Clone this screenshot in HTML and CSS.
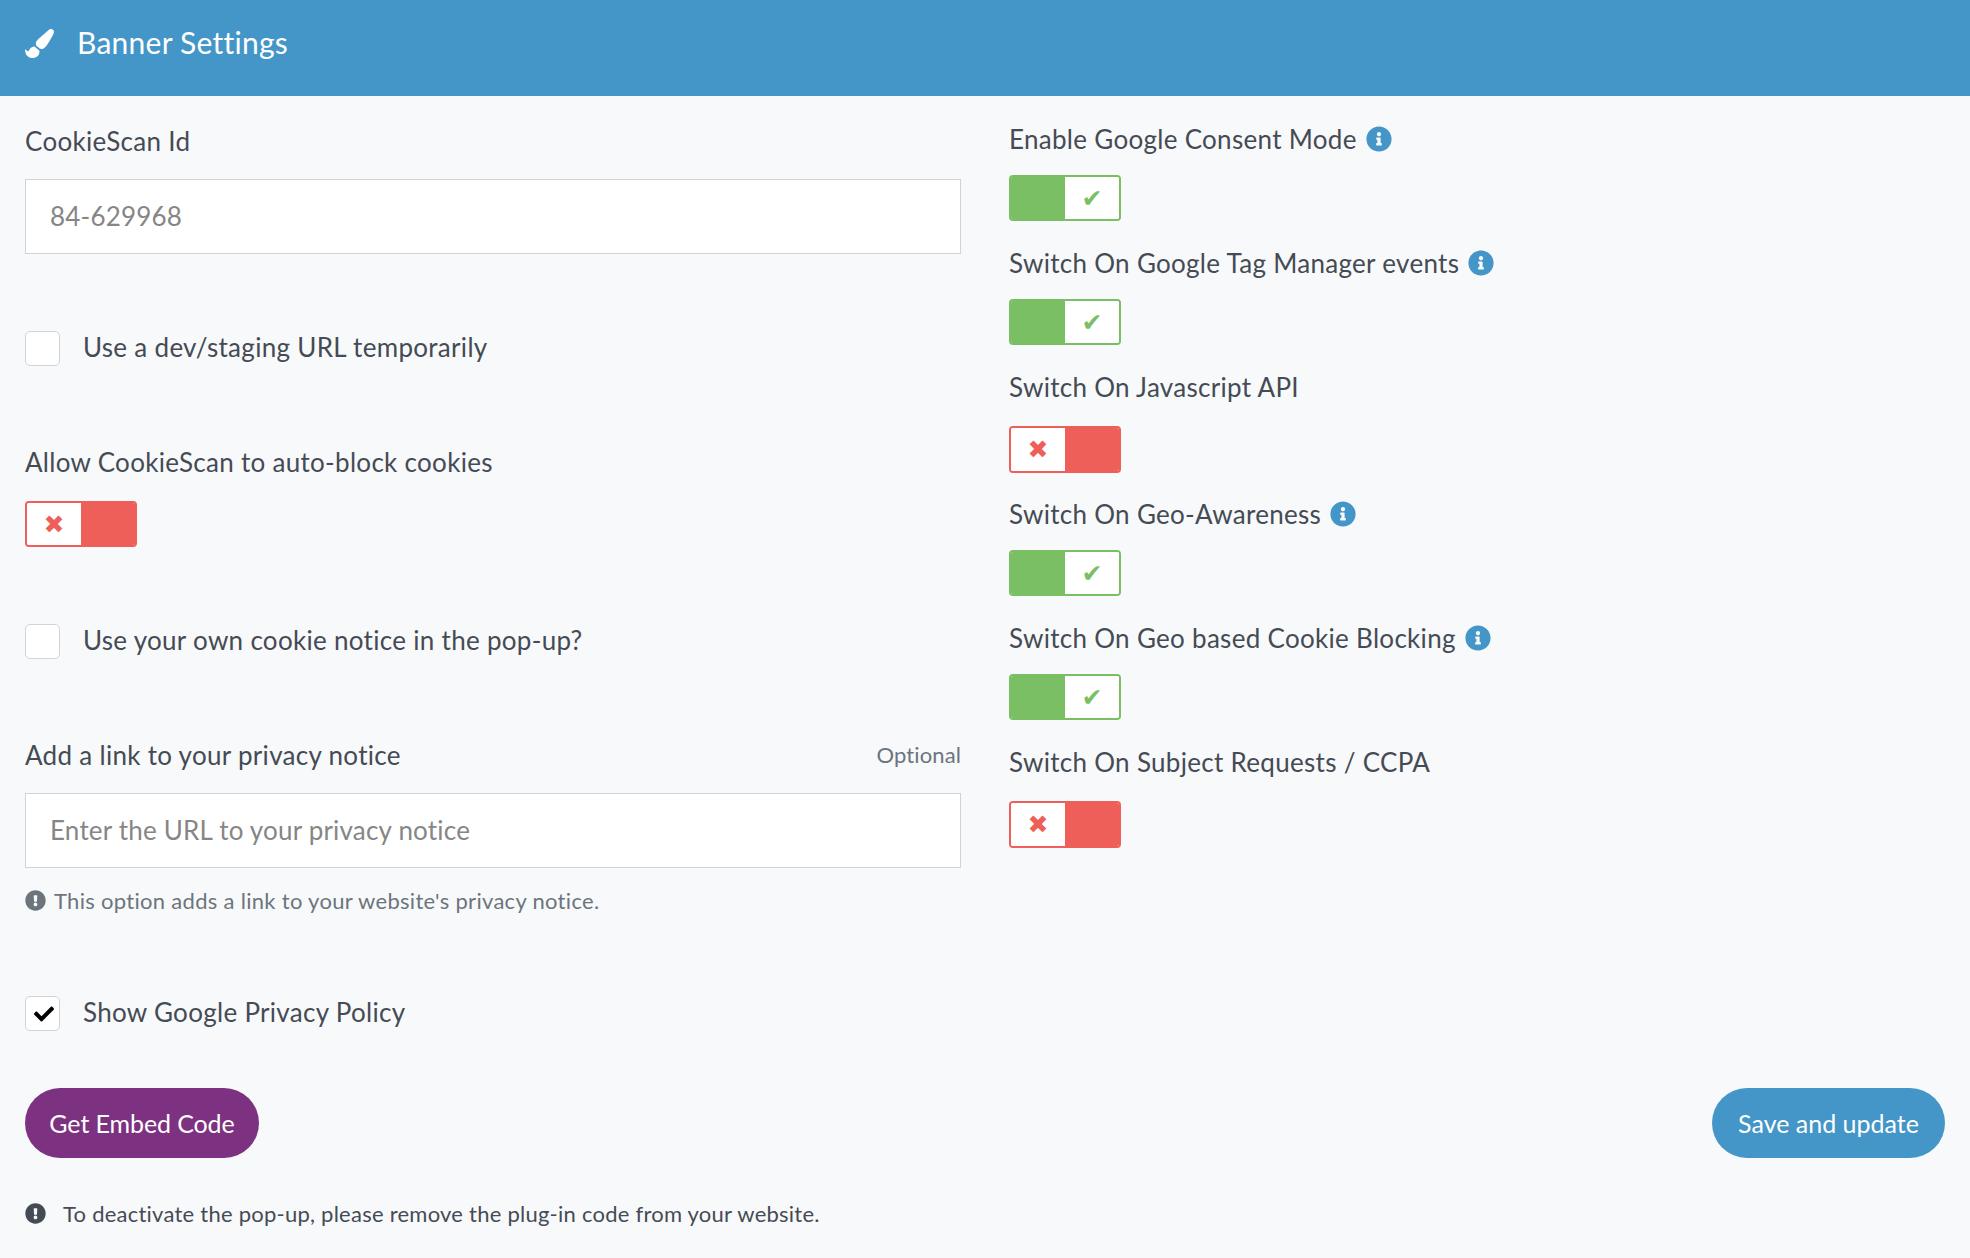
FILE: index.html
```html
<!DOCTYPE html>
<html lang="en">
<head>
<meta charset="utf-8">
<title>Banner Settings</title>
<link rel="stylesheet" href="styles.css">
</head>
<body>
<svg class="sprite" width="0" height="0" aria-hidden="true">
  <symbol id="i-brush" viewBox="0 0 512 512"><path d="M167.02 309.34c-40.12 2.58-76.53 17.86-97.19 72.3-2.35 6.21-8 9.98-14.59 9.98-11.11 0-45.46-27.67-55.25-34.35C0 439.62 37.93 512 128 512c75.86 0 128-43.77 128-120.19 0-3.11-.65-6.08-.97-9.13l-88.01-73.34zM457.89 0c-15.16 0-29.37 6.71-40.21 16.45C213.27 199.05 192 203.34 192 257.09c0 13.7 3.25 26.76 8.73 38.7l63.82 53.18c7.21 1.8 14.64 3.03 22.39 3.03 62.11 0 98.11-45.47 211.16-256.46 7.38-14.35 13.9-29.85 13.9-45.99C512 20.64 486 0 457.89 0z"/></symbol>
  <symbol id="i-info" viewBox="0 0 512 512"><path d="M256 8C119.043 8 8 119.083 8 256c0 136.997 111.043 248 248 248s248-111.003 248-248C504 119.083 392.957 8 256 8zm0 110c23.196 0 42 18.804 42 42s-18.804 42-42 42-42-18.804-42-42 18.804-42 42-42zm56 254c0 6.627-5.373 12-12 12h-88c-6.627 0-12-5.373-12-12v-24c0-6.627 5.373-12 12-12h12v-64h-12c-6.627 0-12-5.373-12-12v-24c0-6.627 5.373-12 12-12h64c6.627 0 12 5.373 12 12v100h12c6.627 0 12 5.373 12 12v24z"/></symbol>
  <symbol id="i-alert" viewBox="0 0 512 512"><path d="M504 256c0 136.997-111.043 248-248 248S8 392.997 8 256C8 119.083 119.043 8 256 8s248 111.083 248 248zm-248 50c-25.405 0-46 20.595-46 46s20.595 46 46 46 46-20.595 46-46-20.595-46-46-46zm-43.673-165.346l7.418 136c.347 6.364 5.609 11.346 11.982 11.346h48.546c6.373 0 11.635-4.982 11.982-11.346l7.418-136c.375-6.874-5.098-12.654-11.982-12.654h-63.383c-6.884 0-12.356 5.78-11.981 12.654z"/></symbol>
  <symbol id="i-check" viewBox="0 0 512 512"><path d="M173.898 439.404l-166.4-166.4c-9.997-9.997-9.997-26.206 0-36.204l36.203-36.204c9.997-9.998 26.207-9.998 36.204 0L192 312.69 432.095 72.596c9.997-9.997 26.207-9.997 36.204 0l36.203 36.204c9.997 9.997 9.997 26.206 0 36.204l-294.4 294.401c-9.998 9.997-26.207 9.997-36.204-.001z"/></symbol>
</svg>

<header class="header">
  <svg class="header-icon"><use href="#i-brush"/></svg>
  <h1 class="header-title">Banner Settings</h1>
</header>

<main class="content">
  <section class="column">
    <label class="label">CookieScan Id</label>
    <input class="input input-id" type="text" placeholder="84-629968">

    <div class="check-row check-first">
      <span class="box"></span><span class="check-text">Use a dev/staging URL temporarily</span>
    </div>

    <label class="label label-block">Allow CookieScan to auto-block cookies</label>
    <div class="switch switch-off"><span class="knob">✖</span><span class="fill"></span></div>

    <div class="check-row check-second">
      <span class="box"></span><span class="check-text">Use your own cookie notice in the pop-up?</span>
    </div>

    <div class="label-split">
      <label class="label">Add a link to your privacy notice</label>
      <span class="optional">Optional</span>
    </div>
    <input class="input input-id" type="text" placeholder="Enter the URL to your privacy notice">
    <p class="hint"><svg class="hint-icon"><use href="#i-alert"/></svg>This option adds a link to your website's privacy notice.</p>

    <div class="check-row check-third">
      <span class="box"><svg class="box-tick"><use href="#i-check"/></svg></span><span class="check-text">Show Google Privacy Policy</span>
    </div>

    <div class="embed-row">
      <button class="btn btn-embed" type="button">Get Embed Code</button>
    </div>
    <p class="notice"><svg class="notice-icon"><use href="#i-alert"/></svg>To deactivate the pop-up, please remove the plug-in code from your website.</p>
  </section>

  <section class="column column-right">
    <div class="option">
      <div class="option-label">Enable Google Consent Mode<svg class="info"><use href="#i-info"/></svg></div>
      <div class="switch switch-on"><span class="fill"></span><span class="knob">✔</span></div>
    </div>
    <div class="option">
      <div class="option-label">Switch On Google Tag Manager events<svg class="info"><use href="#i-info"/></svg></div>
      <div class="switch switch-on"><span class="fill"></span><span class="knob">✔</span></div>
    </div>
    <div class="option option-plain">
      <div class="option-label">Switch On Javascript API</div>
      <div class="switch switch-off"><span class="knob">✖</span><span class="fill"></span></div>
    </div>
    <div class="option">
      <div class="option-label">Switch On Geo-Awareness<svg class="info"><use href="#i-info"/></svg></div>
      <div class="switch switch-on"><span class="fill"></span><span class="knob">✔</span></div>
    </div>
    <div class="option">
      <div class="option-label">Switch On Geo based Cookie Blocking<svg class="info"><use href="#i-info"/></svg></div>
      <div class="switch switch-on"><span class="fill"></span><span class="knob">✔</span></div>
    </div>
    <div class="option option-plain">
      <div class="option-label">Switch On Subject Requests / CCPA</div>
      <div class="switch switch-off"><span class="knob">✖</span><span class="fill"></span></div>
    </div>
    <div class="save-row">
      <button class="btn btn-save" type="button">Save and update</button>
    </div>
  </section>
</main>
</body>
</html>
```
FILE: styles.css
```css
* { box-sizing: border-box; }
html, body { margin: 0; padding: 0; }
body {
  height: 1258px;
  background: #f8f9fb;
  color: #454b54;
  font-family: "Lato", "Noto Sans", sans-serif;
  font-size: 26px;
  letter-spacing: 0.3px;
  line-height: 30px;
  overflow: hidden;
}
.sprite { position: absolute; }

.header {
  height: 96px;
  background: #4396c7;
  color: #fff;
  display: flex;
  align-items: center;
  padding: 0 0 10px 25px;
}
.header-icon { width: 29px; height: 29px; fill: #fff; margin-right: 23px; }
.header-title { margin: 0 0 2px; font-size: 30px; font-weight: 400; line-height: 34px; letter-spacing: 0.25px; }

.content {
  display: grid;
  grid-template-columns: 936px 936px;
  column-gap: 48px;
  padding: 30px 25px 0;
}
.column { display: flex; flex-direction: column; align-items: stretch; }

.label { display: block; height: 30px; }
.label-block { margin-top: 81px; margin-bottom: 24px; }
.label-split { display: flex; justify-content: space-between; align-items: center; margin-top: 81px; }
.optional { font-size: 22px; letter-spacing: 0.1px; color: #6c757d; }

.input {
  display: block;
  width: 100%;
  height: 75px;
  margin-top: 23px;
  padding: 0 24px 2px;
  background: #fff;
  border: 1px solid #ced4da;
  border-radius: 0;
  color: #495057;
  font: inherit;
  letter-spacing: 0.2px;
  outline: none;
}
.input::placeholder { color: #868686; opacity: 1; }

.check-row { display: flex; align-items: center; }
.check-first { margin-top: 77px; }
.check-second { margin-top: 77px; }
.check-third { margin-top: 82px; }
.box {
  flex: none;
  width: 35px;
  height: 35px;
  display: flex;
  align-items: center;
  justify-content: center;
  background: #fff;
  border: 1px solid #ced4da;
  border-radius: 5px;
}
.box-tick { width: 20px; height: 20px; fill: #000; margin-top: 1px; margin-left: 3px; }
.check-text { margin-left: 23px; padding-bottom: 4px; }

.switch {
  display: flex;
  width: 112px;
  height: 46px;
  border: 2px solid;
  border-radius: 4px;
  overflow: hidden;
}
.fill { flex: 1 1 0; }
.knob {
  flex: 1 1 0;
  background: #fff;
  display: flex;
  align-items: center;
  justify-content: center;
  font-family: "DejaVu Sans", sans-serif;
  font-size: 25px;
  font-weight: 700;
  letter-spacing: 0;
  line-height: 1;
}
.switch-on { border-color: #7bbf64; }
.switch-on .fill { background: #7bbf64; }
.switch-on .knob { color: #7bbf64; }
.switch-off { border-color: #ee5f5a; }
.switch-off .fill { background: #ee5f5a; }
.switch-off .knob { color: #ee5f5a; }

.hint {
  margin: 20px 0 0;
  display: flex;
  align-items: center;
  font-size: 22px;
  line-height: 26px;
  color: #6c757d;
}
.hint-icon { width: 21px; height: 21px; fill: #6c757d; margin-right: 8px; margin-top: -2px; }

.embed-row { margin-top: 57px; display: flex; }
.btn {
  height: 70px;
  width: 234px;
  padding: 0;
  border: 0;
  border-radius: 35px;
  color: #fff;
  font: inherit;
  font-size: 25px;
  letter-spacing: 0;
}
.btn-embed { background: #7d3281; letter-spacing: -0.1px; }
.btn-save { background: #4396c7; width: 233px; }

.notice {
  margin: 43px 0 0;
  display: flex;
  align-items: center;
  font-size: 22px;
  letter-spacing: 0.24px;
  line-height: 26px;
}
.notice-icon { width: 21px; height: 21px; fill: #454b54; margin-right: 17px; margin-top: -2px; }

.column-right { position: relative; margin-top: -1px; }
.option { margin-bottom: 28px; }
.option-label { display: flex; align-items: center; height: 30px; margin-bottom: 20px; padding-bottom: 2px; }
.option-plain { margin-bottom: 27px; }
.option-plain .option-label { margin-bottom: 23px; }
.option-plain .switch { height: 47px; }
.info { width: 26px; height: 26px; fill: #4396c7; margin-left: 9px; margin-top: -1px; }
.save-row { position: absolute; right: 0; top: 963px; }
```
